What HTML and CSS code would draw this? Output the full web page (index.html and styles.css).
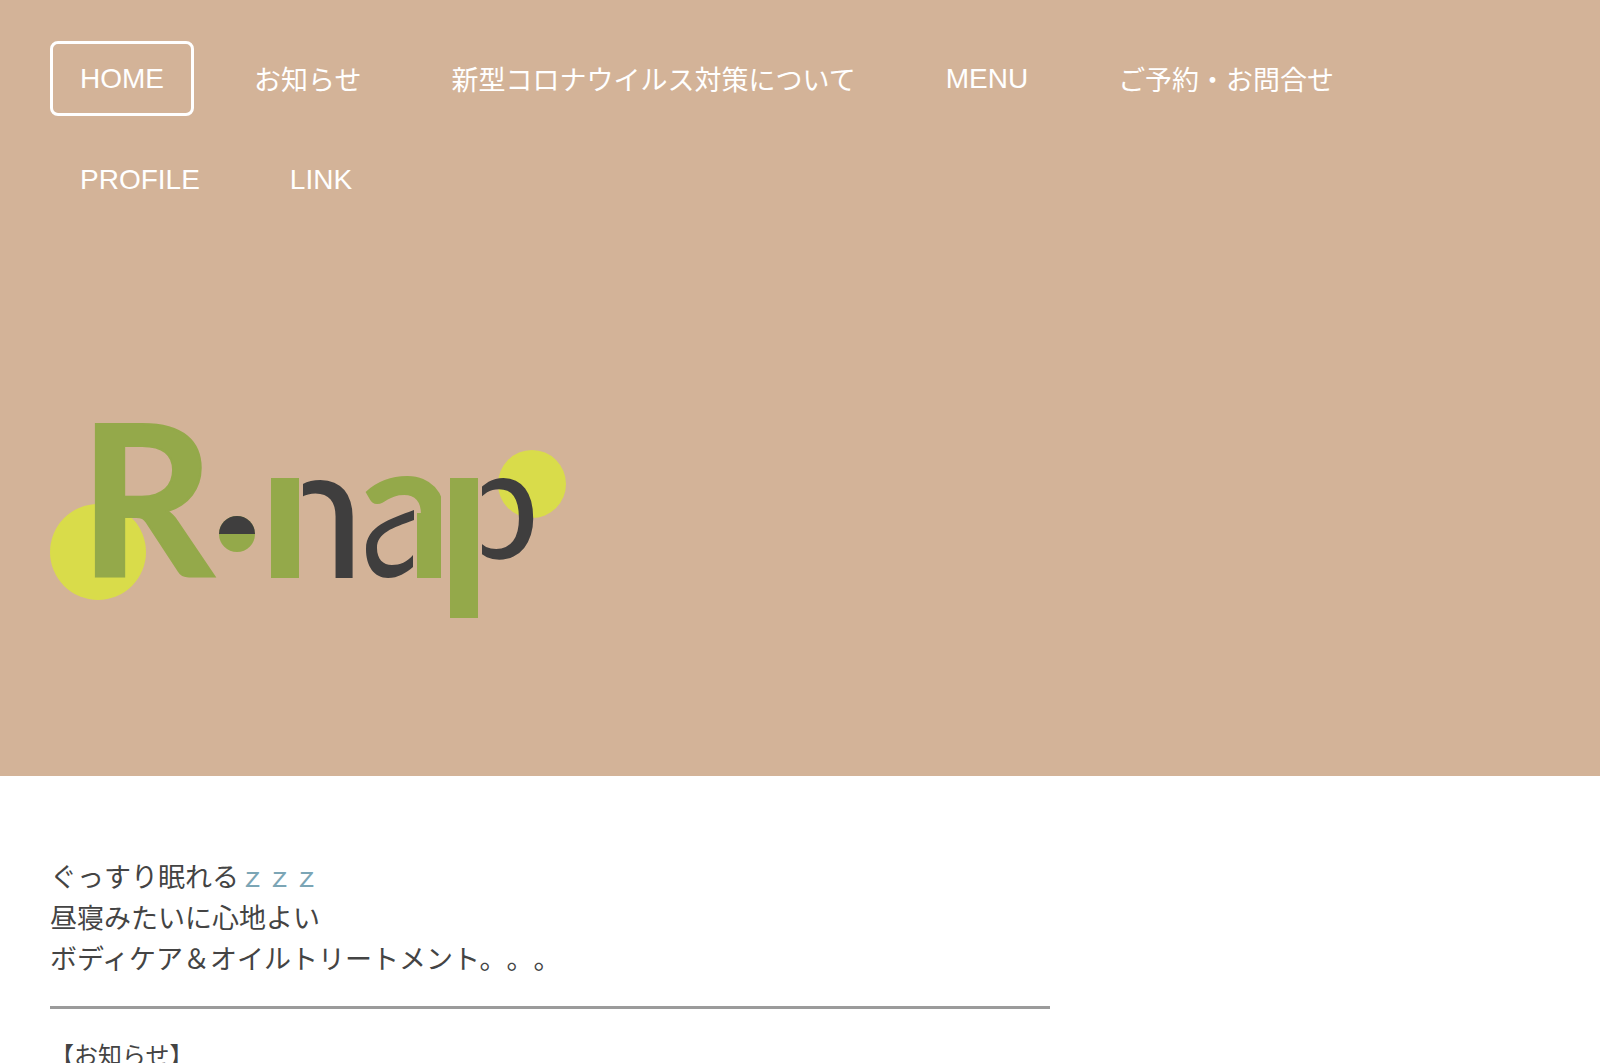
FILE: index.html
```
<!DOCTYPE html>
<html lang="ja">
<head>
    <meta charset="UTF-8">
    <meta name="viewport" content="width=device-width, initial-scale=1.0">
    <title>R・nap</title>
    <link rel="stylesheet" href="styles.css">
</head>
<body>
    <header class="header">
        <nav>
            <ul class="nav">
                <li><a class="en active" href="#">HOME</a></li>
                <li><a href="#news">お知らせ</a></li>
                <li><a href="#covid">新型コロナウイルス対策について</a></li>
                <li><a class="en" href="#menu">MENU</a></li>
                <li><a href="#contact">ご予約・お問合せ</a></li>
                <li><a class="en" href="#profile">PROFILE</a></li>
                <li><a class="en" href="#link">LINK</a></li>
            </ul>
        </nav>
        <a class="logo" href="#" aria-label="R・nap">
            <svg width="516" height="194" viewBox="0 0 516 194">
                <defs>
                    <clipPath id="n-arch"><rect x="253" y="40" width="60" height="120"/></clipPath>
                    <clipPath id="a-top"><path d="M300 40H391V100H367V84H300Z"/></clipPath>
                    <clipPath id="p-bowl"><rect x="432" y="40" width="80" height="120"/></clipPath>
                </defs>
                <circle class="yellow" cx="48" cy="127" r="48"/>
                <circle class="yellow" cx="482" cy="59" r="34"/>
                <text class="green heavy outline" x="29" y="152" font-size="210">R</text>
                <circle class="green" cx="187" cy="109" r="18"/>
                <path class="dark" d="M169 109a18 18 0 0 1 36 0z"/>
                <rect class="green" x="221" y="53" width="28" height="100"/>
                <text class="dark" x="209" y="153" font-size="190" clip-path="url(#n-arch)">n</text>
                <text class="green heavy" x="306" y="153" font-size="196" clip-path="url(#a-top)">a</text>
                <rect class="green" x="367" y="88" width="24" height="65"/>
                <path class="dark" d="M364 85C340 94 316 101 316 124C316 141 324 153 338 153C348 153 356 148 363 142V130C357 137 350 140 342 140C333 140 327 134 327 123C327 108 342 103 364 95Z"/>
                <rect class="green" x="400" y="53" width="28" height="140"/>
                <text class="dark" x="403" y="133" font-size="155" clip-path="url(#p-bowl)">p</text>
            </svg>
        </a>
    </header>
    <main class="content">
        <p class="lead">
            ぐっすり眠れる<span class="zzz">ｚｚｚ</span><br>
            昼寝みたいに心地よい<br>
            ボディケア＆オイルトリートメント。。。
        </p>
        <hr>
        <h2 id="news">【お知らせ】</h2>
    </main>
</body>
</html>
```
FILE: styles.css
```
body {
    margin: 0;
    background-color: #fff;
    color: #444;
    font-family: "Noto Sans CJK JP", sans-serif;
    font-size: 27px;
    line-height: 41px;
}
.header {
    background-color: #d3b398;
    padding: 41px 50px 157px;
}
.nav {
    display: flex;
    flex-wrap: wrap;
    gap: 26px 30px;
    list-style: none;
    margin: 0;
    padding: 0;
}
.nav a {
    display: block;
    padding: 14px 27px;
    border: 3px solid transparent;
    border-radius: 8px;
    color: #fff;
    text-decoration: none;
}
.nav .en {
    font-family: "Liberation Sans", Arial, sans-serif;
    font-size: 28px;
}
.nav .active {
    border-color: #fff;
}
.logo {
    display: block;
    width: fit-content;
    margin-top: 208px;
}
.logo svg {
    display: block;
    overflow: visible;
    font-family: Lato, sans-serif;
}
.yellow {
    fill: #d9dc4a;
}
.green {
    fill: #94a94a;
}
.dark {
    fill: #3f3e3e;
}
.heavy {
    font-weight: 700;
}
.outline {
    stroke: #94a94a;
    stroke-width: 2px;
}
.content {
    padding: 79px 50px;
}
.lead {
    margin: 0;
    text-spacing-trim: space-all;
}
.zzz {
    color: #7ba5b5;
}
hr {
    width: 66.67%;
    height: 3px;
    margin: 28px 0 24px;
    border: none;
    background-color: #9b9b9b;
}
h2 {
    margin: 0;
    font-size: 24px;
    font-weight: 400;
    text-spacing-trim: space-all;
}
```
